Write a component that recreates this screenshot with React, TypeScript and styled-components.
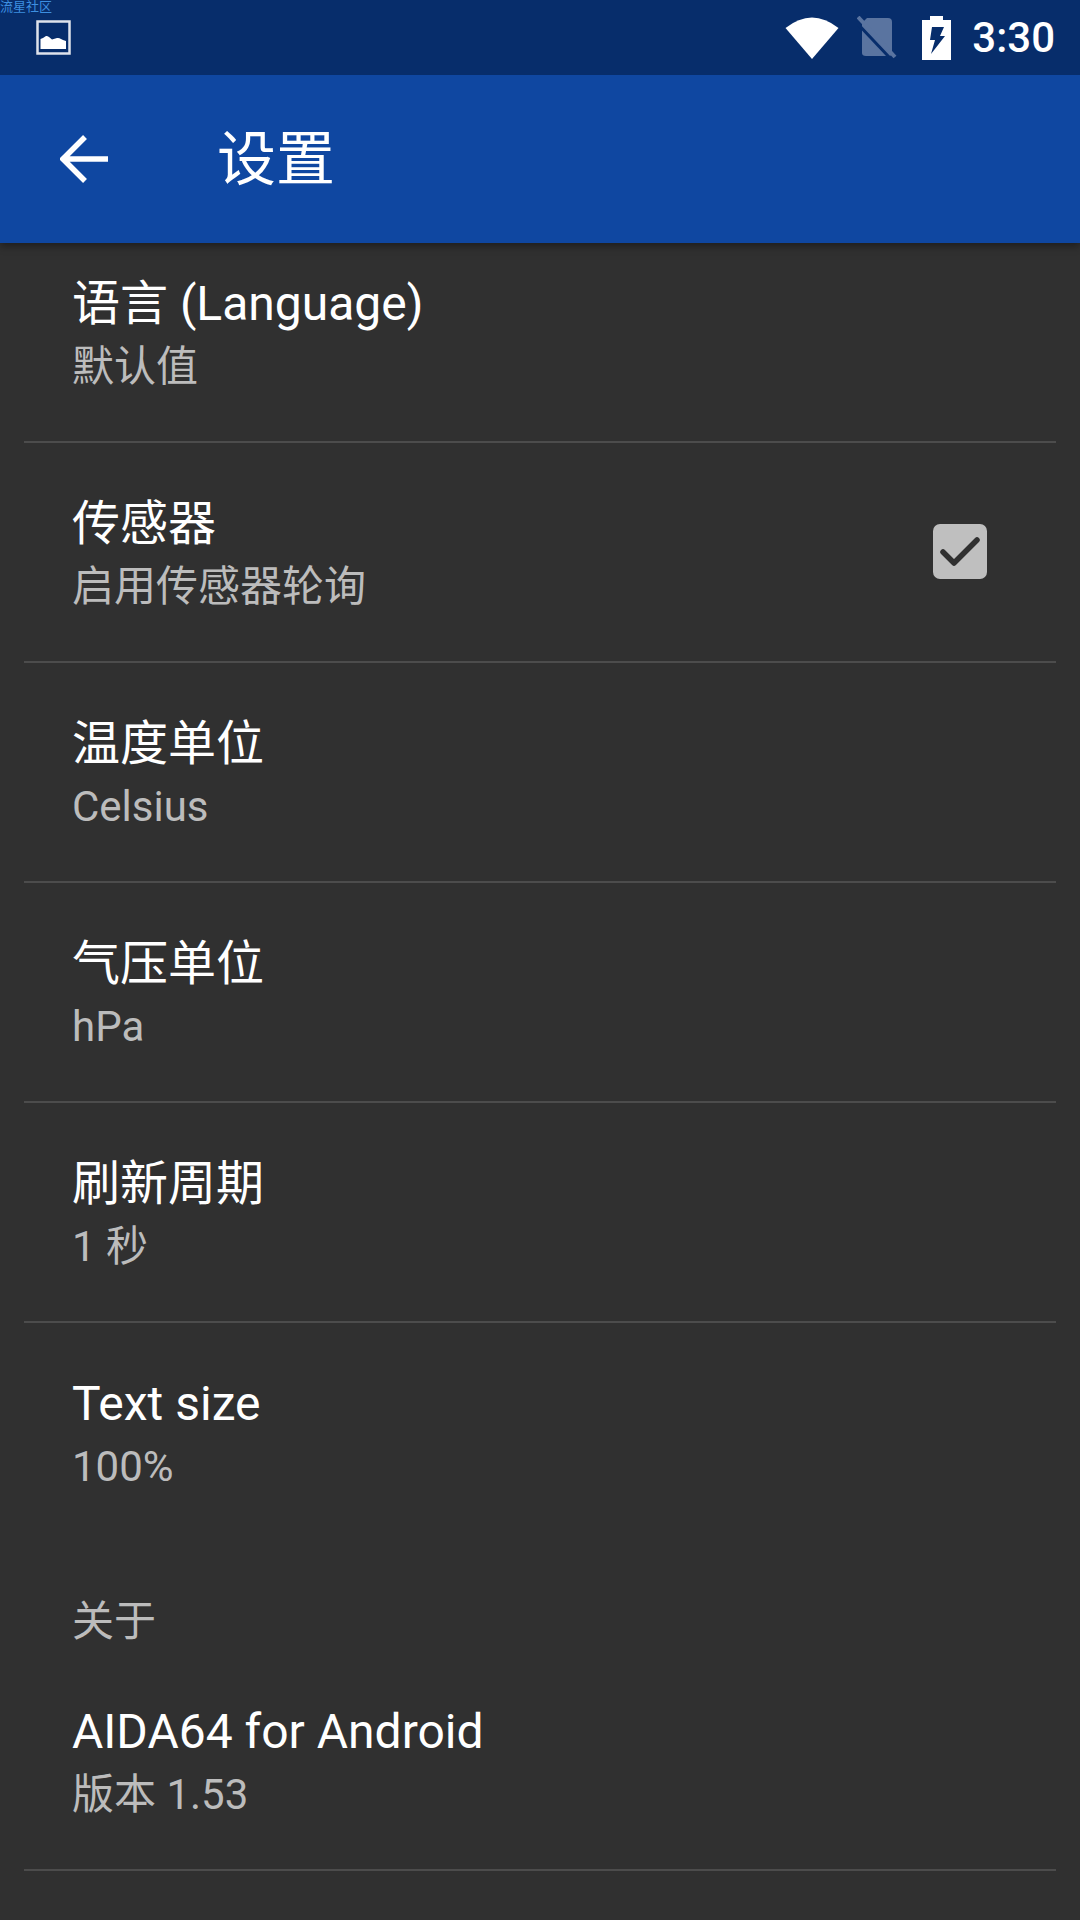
import React from "react";
import styled, { createGlobalStyle } from "styled-components";

const Global = createGlobalStyle`
  html, body { margin: 0; padding: 0; background: #303030; }
  body { font-family: Roboto, "Noto Sans CJK SC", sans-serif; }
`;

const Page = styled.div`
  width: 1080px;
  height: 1920px;
  background: #303030;
  display: flex;
  flex-direction: column;
  overflow: hidden;
`;

const StatusBar = styled.div`
  height: 75px;
  flex: none;
  background: #072d6b;
  display: flex;
  align-items: center;
  position: relative;
  z-index: 3;
`;

const Watermark = styled.span`
  position: absolute;
  left: 0;
  top: 0;
  font-size: 13px;
  line-height: 13px;
  color: #3d8fe0;
`;

const NotificationIcon = styled.svg`
  margin-left: 35px;
  flex: none;
`;

const StatusRight = styled.div`
  margin-left: auto;
  display: flex;
  align-items: center;
  height: 100%;
`;

const WifiIcon = styled.svg`
  margin-right: 18px;
`;

const SimIcon = styled.svg`
  margin-right: 25px;
`;

const BatteryIcon = styled.svg`
  margin-right: 21px;
`;

const Clock = styled.span`
  font-size: 42px;
  font-weight: 500;
  color: #fff;
  margin-right: 25px;
`;

const AppBar = styled.header`
  height: 168px;
  flex: none;
  background: #0f47a1;
  display: flex;
  align-items: center;
  box-shadow: 0 3px 8px rgba(0, 0, 0, 0.4);
  position: relative;
  z-index: 2;
`;

const BackIcon = styled.svg`
  margin-left: 60px;
  flex: none;
`;

const Title = styled.h1`
  margin: 0 0 0 107px;
  font-size: 59px;
  font-weight: 400;
  color: #fff;
  line-height: 1;
`;

const List = styled.main`
  flex: 1;
  margin-top: -20px;
  display: flex;
  flex-direction: column;
`;

const Row = styled.div<{ $divider?: boolean }>`
  height: 220px;
  box-sizing: border-box;
  padding: 0 72px;
  display: flex;
  align-items: center;
  justify-content: space-between;
  position: relative;
  ${(p) =>
    p.$divider
      ? `&::after { content: ""; position: absolute; left: 24px; right: 24px; bottom: 0; height: 2px; background: #4c4c4c; }`
      : ""}
`;

const RowText = styled.div`
  display: flex;
  flex-direction: column;
  gap: 3px;
`;

const RowTitle = styled.div`
  font-size: 48px;
  line-height: 64px;
  color: #fff;
`;

const RowSummary = styled.div`
  font-size: 42px;
  line-height: 56px;
  color: #bcbcbc;
`;

const Check = styled.div`
  width: 54px;
  height: 55px;
  border-radius: 7px;
  background: #bfbfbf;
  margin: 0 21px 3px 0;
  display: flex;
  align-items: center;
  justify-content: center;
`;

const Category = styled.div`
  height: 108px;
  box-sizing: border-box;
  padding: 0 0 1px 72px;
  display: flex;
  align-items: flex-end;
  font-size: 42px;
  line-height: 56px;
  color: #bcbcbc;
`;

const rows: { title: string; summary: string; divider: boolean; check?: boolean }[] = [
  { title: "语言 (Language)", summary: "默认值", divider: true },
  { title: "传感器", summary: "启用传感器轮询", divider: true, check: true },
  { title: "温度单位", summary: "Celsius", divider: true },
  { title: "气压单位", summary: "hPa", divider: true },
  { title: "刷新周期", summary: "1 秒", divider: true },
  { title: "Text size", summary: "100%", divider: false },
];

function SettingRow(r: { title: string; summary: string; divider: boolean; check?: boolean }) {
  return (
    <Row $divider={r.divider}>
      <RowText>
        <RowTitle>{r.title}</RowTitle>
        <RowSummary>{r.summary}</RowSummary>
      </RowText>
      {r.check && (
        <Check>
          <svg width="42" height="34" viewBox="0 0 42 34">
            <path d="M4 17 L15 28 L38 5" fill="none" stroke="#303030" strokeWidth="5.5" strokeLinecap="round" strokeLinejoin="round" />
          </svg>
        </Check>
      )}
    </Row>
  );
}

export default function App() {
  return (
    <Page>
      <Global />
      <StatusBar>
        <Watermark>流星社区</Watermark>
        <NotificationIcon width="37" height="37" viewBox="0 0 37 37">
          <rect x="2.500" y="2.500" width="32" height="32" fill="none" stroke="#dfe3ec" strokeWidth="2.500" />
          <path d="M5.500 30 V20 L8 19 L11 17 Q12 16.500 14 18 L17 20.500 L22 19 Q24 18.500 26 20 L28 21 L31 22 V30 Z" fill="#fff" />
        </NotificationIcon>
        <StatusRight>
          <WifiIcon width="54" height="44" viewBox="0 0 54 44">
            <path d="M0.500 12 Q27 -9 53.500 12 L27 43 Z" fill="#fff" />
          </WifiIcon>
          <SimIcon width="40" height="44" viewBox="0 0 40 44">
            <path d="M10 2 H31 Q35 2 35 6 V37 Q35 40 32 40 H9 Q5 40 5 37 V7 Z" fill="#5a74a0" />
            <path d="M-1 6 L32 41" stroke="#072d6b" strokeWidth="3" />
            <path d="M1 1 L38 41" stroke="#5a74a0" strokeWidth="4" />
          </SimIcon>
          <BatteryIcon width="29" height="44" viewBox="0 0 29 44">
            <path d="M8 0 H21 V4 H29 V44 H0 V4 H8 Z" fill="#fff" />
            <path d="M10 11 H22 L18 20 H23 L9 38 L13 24 H8 Z" fill="#072d6b" />
          </BatteryIcon>
          <Clock>3:30</Clock>
        </StatusRight>
      </StatusBar>
      <AppBar>
        <BackIcon width="50" height="50" viewBox="0 0 50 50">
          <path d="M48 25 H5 M25 3 L3 25 L25 47" fill="none" stroke="#fff" strokeWidth="5.500" />
        </BackIcon>
        <Title>设置</Title>
      </AppBar>
      <List>
        {rows.map((r) => (
          <SettingRow key={r.title} {...r} />
        ))}
        <Category>关于</Category>
        <SettingRow title="AIDA64 for Android" summary="版本 1.53" divider />
      </List>
    </Page>
  );
}
